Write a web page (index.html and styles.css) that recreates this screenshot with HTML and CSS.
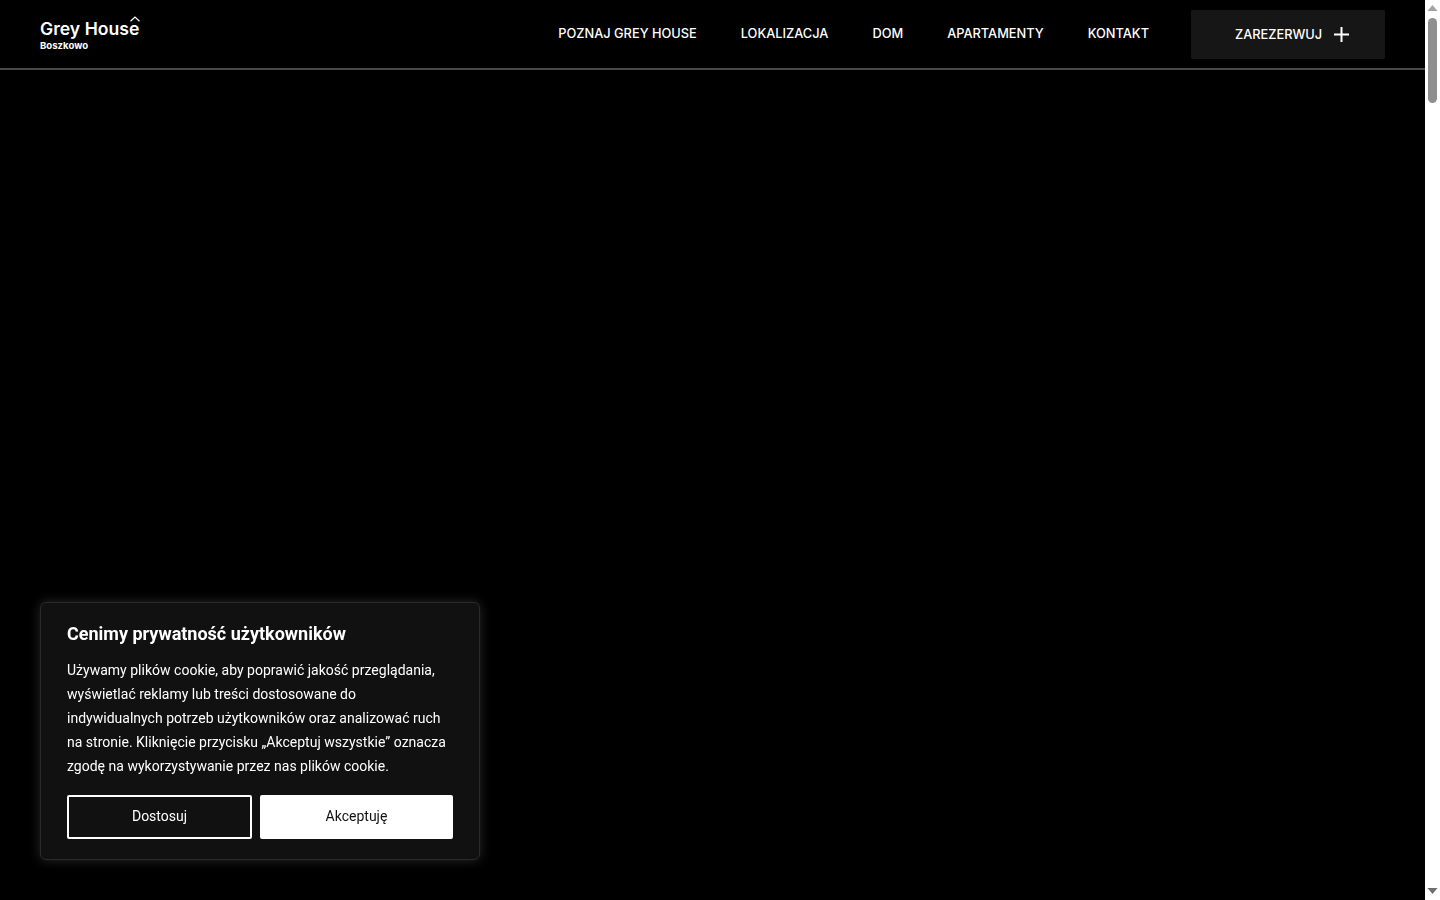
FILE: index.html
```html
<!DOCTYPE html>
<html lang="pl">
<head>
    <meta charset="UTF-8">
    <meta name="viewport" content="width=device-width, initial-scale=1.0">
    <title>Grey House Boszkowo</title>
    <link rel="stylesheet" href="styles.css">
</head>
<body>
    <div class="page">
        <div class="content">
            <header class="header">
                <a class="logo" href="#">
                    <span class="logo_name">Grey House<svg class="logo_roof" width="10" height="6" viewBox="0 0 10 6"><path d="M0.5 5.2 L5 1 L9.5 5.2" fill="none" stroke="#fff" stroke-width="1.2"/></svg></span>
                    <span class="logo_city">Boszkowo</span>
                </a>
                <nav class="nav">
                    <a href="#">POZNAJ GREY HOUSE</a>
                    <a href="#">LOKALIZACJA</a>
                    <a href="#">DOM</a>
                    <a href="#">APARTAMENTY</a>
                    <a href="#">KONTAKT</a>
                </nav>
                <a class="book_btn" href="#">
                    ZAREZERWUJ
                    <svg width="15" height="15" viewBox="0 0 15 15"><path d="M7.5 0 V15 M0 7.5 H15" stroke="#fff" stroke-width="2"/></svg>
                </a>
            </header>
        </div>
        <div class="scrollbar">
            <svg width="15" height="15" viewBox="0 0 15 15"><path d="M2.5 11 L7.5 5 L12.5 11 Z" fill="#a3a3a3"/></svg>
            <div class="scroll_track"><div class="scroll_thumb"></div></div>
            <svg class="arrow_down" width="15" height="15" viewBox="0 0 15 15"><path d="M2.5 5 L7.5 11 L12.5 5 Z" fill="#6e6e6e"/></svg>
        </div>
    </div>

    <div class="cookie">
        <h2 class="cookie_title">Cenimy prywatność użytkowników</h2>
        <p class="cookie_text">Używamy plików cookie, aby poprawić jakość przeglądania, wyświetlać reklamy lub treści dostosowane do indywidualnych potrzeb użytkowników oraz analizować ruch na stronie. Kliknięcie przycisku „Akceptuj wszystkie” oznacza zgodę na wykorzystywanie przez nas plików cookie.</p>
        <div class="cookie_btns">
            <button class="btn_custom">Dostosuj</button>
            <button class="btn_accept">Akceptuję</button>
        </div>
    </div>
</body>
</html>
```

FILE: styles.css
```css
*{
    margin: 0;
    padding: 0;
    box-sizing: border-box;
}
html,body{
    height: 100%;
    overflow: hidden;
}
body{
    background: #000;
    color: #fff;
    font-family: "Inter", "Liberation Sans", sans-serif;
}
a{
    color: inherit;
    text-decoration: none;
}
.page{
    display: flex;
    height: 100vh;
}
.content{
    flex: 1;
    min-width: 0;
}
.header{
    display: flex;
    align-items: center;
    height: 70px;
    padding: 0 40px;
    border-bottom: 2px solid #484848;
}
.logo{
    display: flex;
    flex-direction: column;
    margin-top: 3px;
}
.logo_name{
    position: relative;
    font-size: 17.6px;
    font-weight: 600;
    line-height: 20px;
}
.logo_roof{
    position: absolute;
    top: -3px;
    left: 90px;
}
.logo_city{
    font-size: 9.6px;
    font-weight: 700;
    line-height: 12px;
    margin-top: 1px;
}
.nav{
    display: flex;
    gap: 44px;
    margin-left: auto;
    font-size: 12.8px;
    font-weight: 500;
    margin-top: -2px;
}
.book_btn{
    display: flex;
    align-items: center;
    gap: 12px;
    width: 194px;
    height: 49px;
    margin-left: 42px;
    margin-top: 1px;
    padding-left: 44px;
    background: #161616;
    border-radius: 2px;
    font-size: 12.8px;
    font-weight: 500;
}
.scrollbar{
    display: flex;
    flex-direction: column;
    width: 15px;
    background: #fff;
}
.scroll_track{
    flex: 1;
    padding: 3px 3px;
}
.scroll_thumb{
    width: 9px;
    height: 85px;
    background: #8f8f8f;
    border-radius: 5px;
}
.arrow_down{
    margin-bottom: 2px;
}
.cookie{
    position: fixed;
    left: 40px;
    bottom: 40px;
    width: 440px;
    height: 258px;
    padding: 19px 26px 20px;
    background: #111;
    border: 1px solid #2a2a2a;
    border-radius: 6px;
    box-shadow: 0 0 12px rgba(255, 255, 255, 0.16);
    font-family: "Roboto", "Liberation Sans", sans-serif;
}
.cookie_title{
    font-size: 18px;
    font-weight: 700;
    line-height: 24px;
    margin-bottom: 12px;
}
.cookie_text{
    font-size: 14px;
    line-height: 24px;
    letter-spacing: 0.01px;
}
.cookie_btns{
    display: flex;
    gap: 8px;
    margin-top: 17px;
}
.cookie_btns button{
    height: 44px;
    padding-bottom: 2px;
    border-radius: 2px;
    font-family: inherit;
    font-size: 14px;
    cursor: pointer;
}
.btn_custom{
    width: 185px;
    background: #111;
    color: #fff;
    border: 2px solid #fff;
}
.btn_accept{
    width: 193px;
    background: #fff;
    color: #111;
    border: 2px solid #fff;
}
```
